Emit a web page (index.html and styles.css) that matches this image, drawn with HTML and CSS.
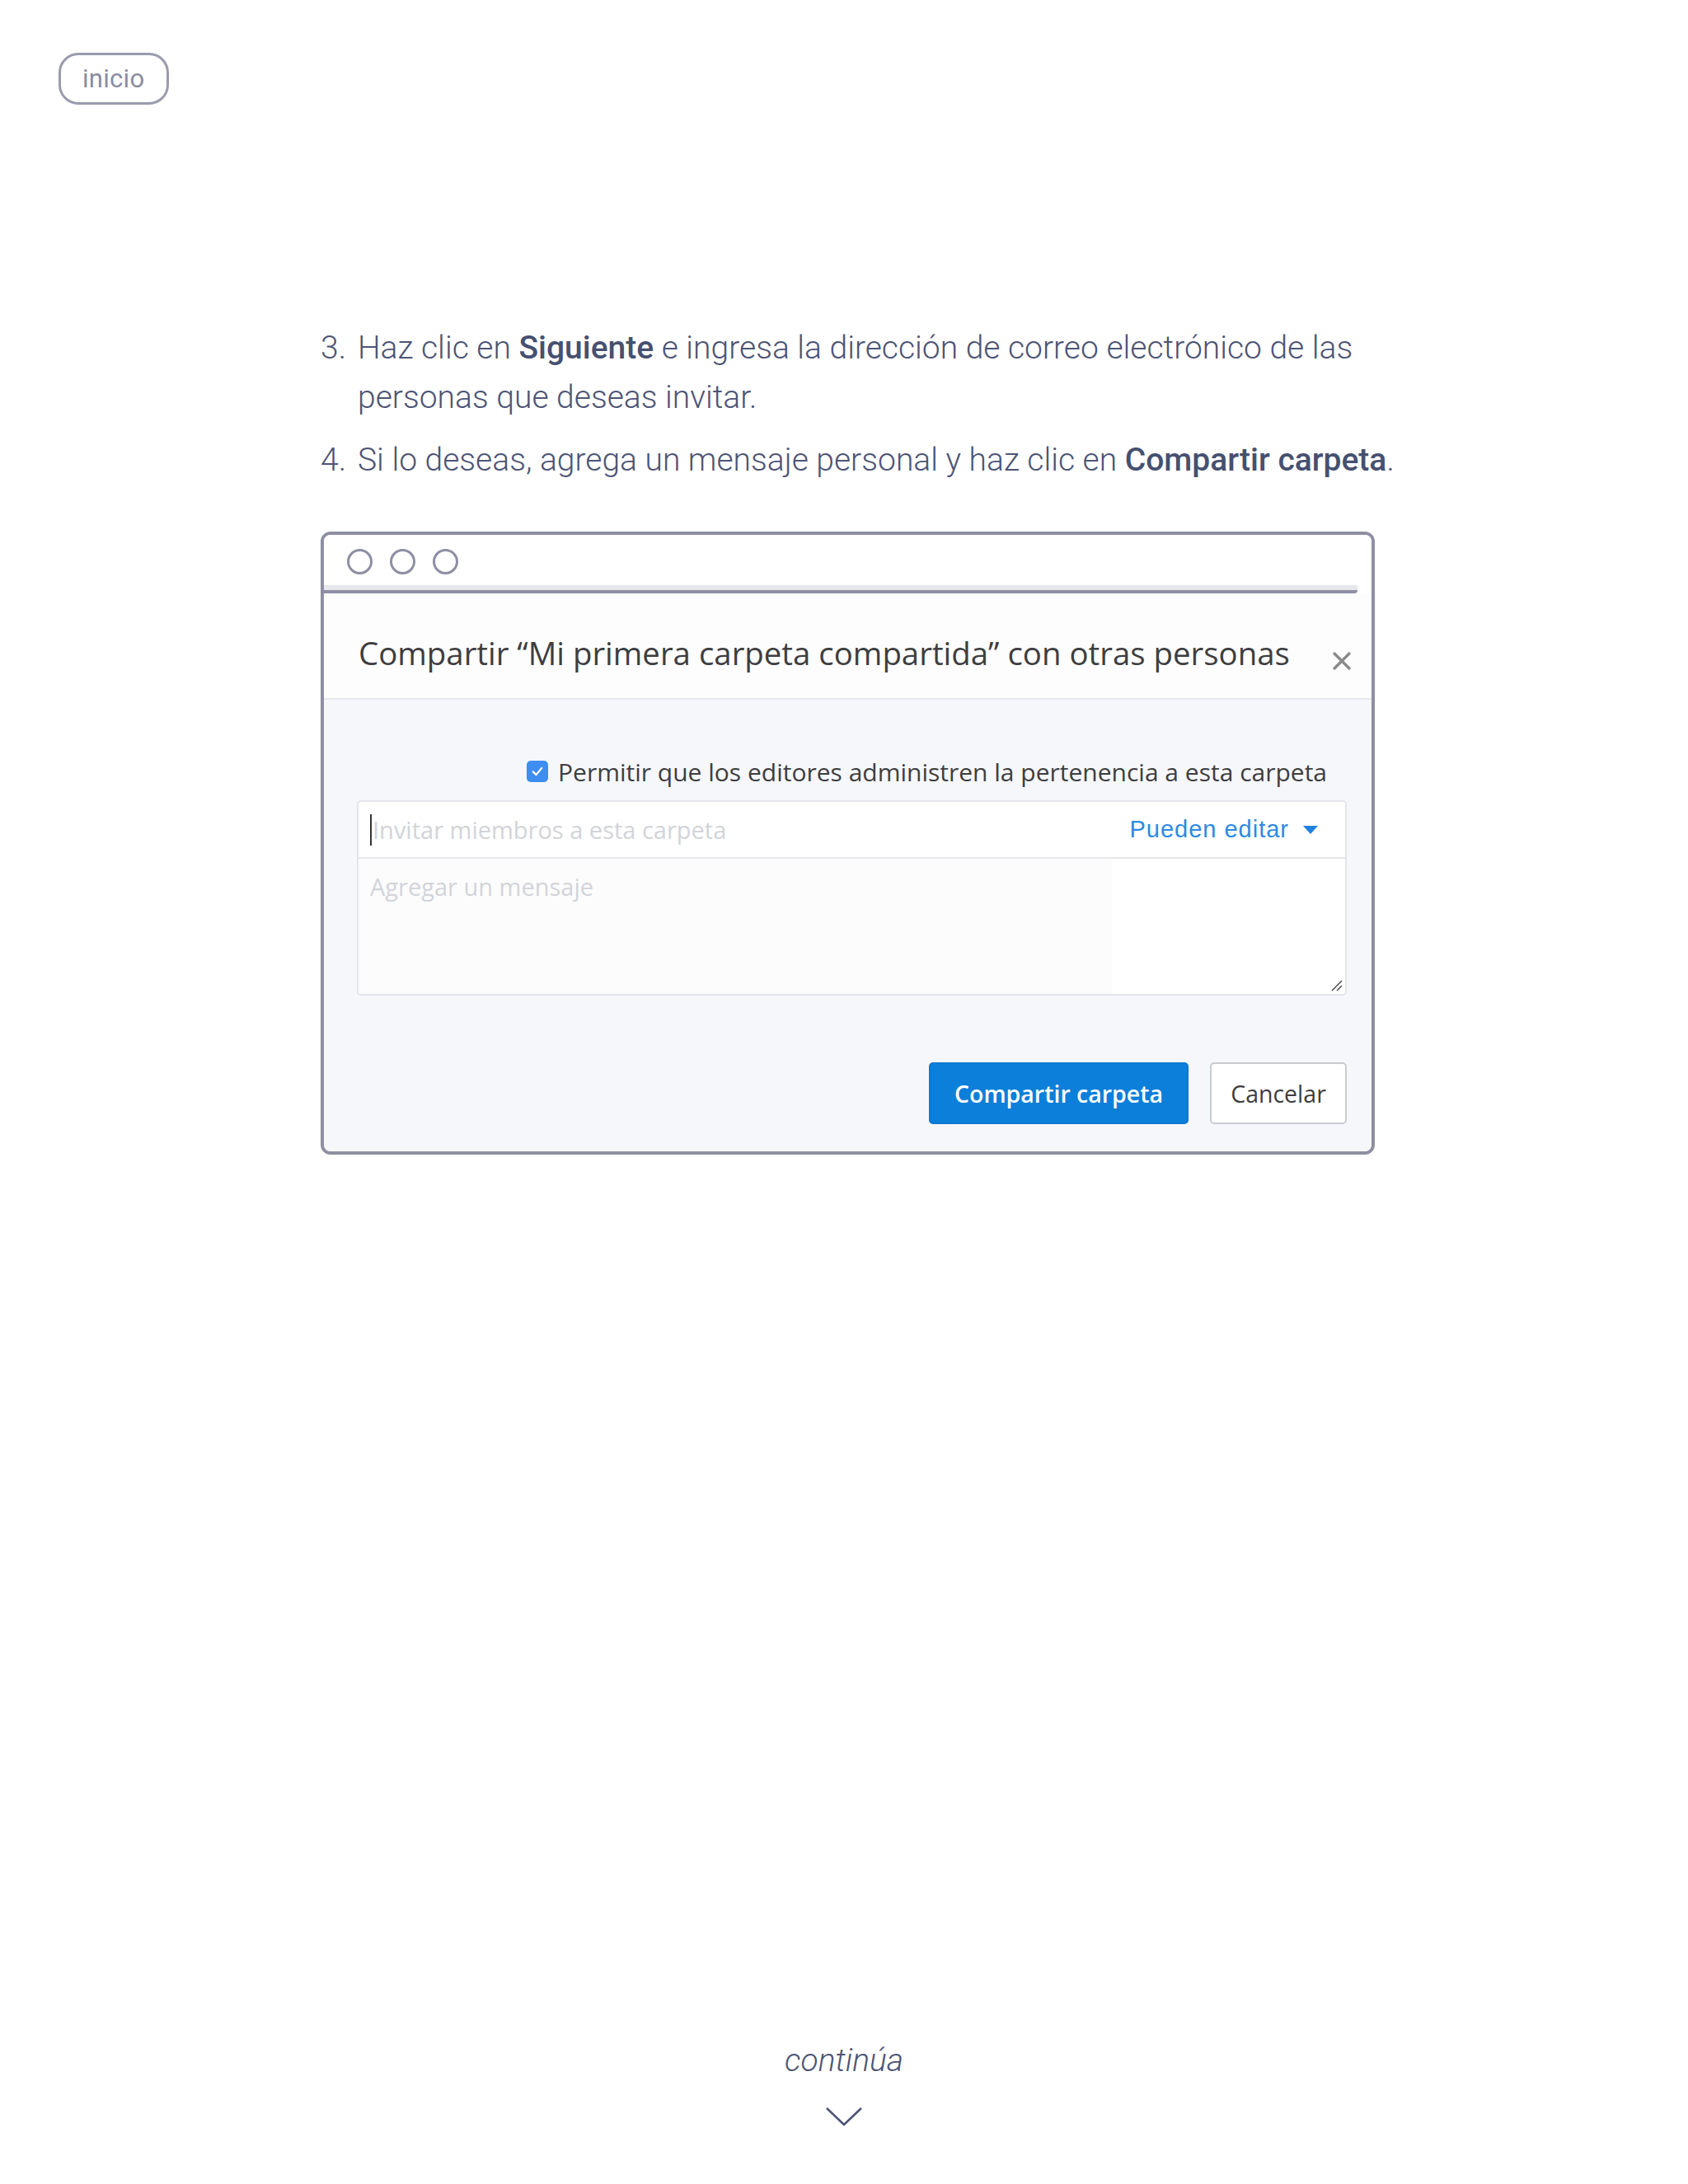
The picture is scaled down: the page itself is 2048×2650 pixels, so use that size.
FILE: index.html
```html
<!DOCTYPE html>
<html lang="es">
<head>
<meta charset="utf-8">
<title>Compartir carpeta</title>
<link rel="stylesheet" href="styles.css">
</head>
<body>
<header class="top">
  <a class="home-pill" href="#">inicio</a>
</header>
<main class="content">
  <ol class="steps">
    <li class="step"><span class="num">3.</span><p>Haz clic en <strong>Siguiente</strong> e ingresa la dirección de correo electrónico de las personas que deseas invitar.</p></li>
    <li class="step"><span class="num">4.</span><p>Si lo deseas, agrega un mensaje personal y haz clic en <strong>Compartir carpeta</strong>.</p></li>
  </ol>
  <figure class="window">
    <div class="titlebar">
      <span class="dot"></span><span class="dot"></span><span class="dot"></span>
    </div>
    <div class="sep"></div>
    <div class="dialog">
      <div class="dialog-head">
        <h2>Compartir “Mi primera carpeta compartida” con otras personas</h2>
        <svg class="close" viewBox="0 0 24 24" width="24" height="24"><path d="M3 3 L21 21 M21 3 L3 21" stroke="#8a8a8a" stroke-width="3.4" stroke-linecap="round" fill="none"/></svg>
      </div>
      <div class="dialog-body">
        <label class="check">
          <span class="box"><svg viewBox="0 0 24 24" width="18" height="18"><path d="M5 12.5 L10 17.5 L19 6.5" stroke="#fff" stroke-width="3" fill="none" stroke-linecap="round" stroke-linejoin="round"/></svg></span>
          Permitir que los editores administren la pertenencia a esta carpeta
        </label>
        <div class="fields">
          <div class="invite">
            <span class="caret"></span>
            <span class="ph">Invitar miembros a esta carpeta</span>
            <span class="perm">Pueden editar <svg viewBox="0 0 20 12" width="20" height="12"><path d="M1 1 L19 1 L10 11 Z" fill="#1f82e0"/></svg></span>
          </div>
          <div class="message">
            <span class="ph">Agregar un mensaje</span>
            <svg class="grip" viewBox="0 0 16 16" width="16" height="16"><path d="M15 3 L3 15 M15 9 L9 15" stroke="#555" stroke-width="1.6" fill="none"/></svg>
          </div>
        </div>
        <div class="actions">
          <button class="btn primary" type="button">Compartir carpeta</button>
          <button class="btn secondary" type="button">Cancelar</button>
        </div>
      </div>
    </div>
  </figure>
</main>
<footer class="more">
  <span class="more-label">continúa</span>
  <svg class="chevron" viewBox="0 0 46 24" width="46" height="24"><path d="M2 2 L23 22 L44 2" stroke="#4d5475" stroke-width="2.6" fill="none"/></svg>
</footer>
</body>
</html>
```

FILE: styles.css
```css
* { box-sizing: border-box; }
html, body { margin: 0; padding: 0; }
body {
  width: 2048px;
  min-height: 2650px;
  background: #ffffff;
  font-family: Roboto, "Noto Sans", sans-serif;
  color: #4d5475;
  position: relative;
}

.top {
  padding: 64px 0 0 71px;
  height: 392px;
}
.home-pill {
  display: inline-flex;
  align-items: center;
  height: 63px;
  width: 134px;
  padding-left: 26px;
  border: 3px solid #9b9bae;
  border-radius: 24px;
  font-size: 31px;
  font-weight: 400;
  color: #8a8b9f;
  text-decoration: none;
  letter-spacing: 0.3px;
}

.content {
  width: 1279px;
  margin-left: 389px;
}

.steps {
  list-style: none;
  margin: 0 -90px 0 0;
  padding: 0;
}
.step {
  display: flex;
  font-size: 39px;
  font-weight: 300;
  line-height: 60px;
}
.step + .step { margin-top: 16px; }
.num { width: 45px; flex: none; }
.step p { margin: 0; }
.step strong { font-weight: 500; color: #465070; }

.window {
  margin: 57px 0 0 0;
  border: 4px solid #8f8fa3;
  border-radius: 12px;
  overflow: hidden;
  background: #fff;
}
.titlebar {
  height: 61px;
  display: flex;
  align-items: center;
  gap: 21px;
  padding: 4px 0 0 28px;
  background: #fff;
}
.dot {
  width: 31px;
  height: 31px;
  border: 3.5px solid #8f8fa3;
  border-radius: 50%;
}
.sep {
  height: 10px;
  margin-right: 17px;
  border-top: 6px solid #e6e7eb;
  background: #8f8fa3;
  border-radius: 0 0 4px 0;
}

.dialog { font-family: "Open Sans", "Noto Sans", sans-serif; }
.dialog-head {
  height: 129px;
  display: flex;
  justify-content: space-between;
  align-items: flex-start;
  padding: 46px 24px 0 42px;
  background: #fdfdfe;
  border-bottom: 2px solid #e7e8ed;
}
.dialog-head h2 {
  margin: 0;
  font-size: 38.4px;
  font-weight: 400;
  color: #3e3e40;
  letter-spacing: 0;
}
.close { margin-top: 24px; width: 24px; height: 24px; }

.dialog-body {
  background: #f6f7fb;
  padding: 67px 30px 33px 40px;
}
.check {
  display: flex;
  align-items: center;
  justify-content: flex-end;
  gap: 12px;
  font-size: 30px;
  color: #3e3e40;
  padding-right: 24px;
  height: 40px;
}
.box {
  width: 26px;
  height: 26px;
  border-radius: 5px;
  background: #3d8ef0;
  display: flex;
  align-items: center;
  justify-content: center;
}
.fields {
  margin-top: 15px;
  border: 2px solid #e3e5ea;
  border-radius: 5px;
  overflow: hidden;
}
.invite {
  height: 69px;
  display: flex;
  align-items: center;
  padding: 0 32px 0 14px;
  background: #fff;
  border-bottom: 2px solid #e5e7ec;
}
.caret {
  width: 2px;
  height: 38px;
  background: #333;
  margin-right: 1px;
}
.ph {
  font-size: 29px;
  color: #d2d4d9;
}
.perm {
  margin-left: auto;
  display: flex;
  align-items: center;
  gap: 16px;
  font-family: "Liberation Sans", Arial, sans-serif;
  font-size: 29px;
  letter-spacing: 1px;
  color: #2d8ae3;
}
.message {
  height: 164px;
  position: relative;
  padding: 14px 14px;
  background: linear-gradient(to right, #fcfcfd 0, #fcfcfd 914px, #ffffff 914px);
}
.grip { position: absolute; right: 3px; bottom: 3px; }

.actions {
  margin-top: 81px;
  display: flex;
  justify-content: flex-end;
  gap: 26px;
}
.btn {
  height: 75px;
  font-family: "Open Sans", "Noto Sans", sans-serif;
  font-size: 28.5px;
  border-radius: 5px;
  padding: 0;
}
.primary {
  width: 315px;
  background: #0b7fda;
  border: 2px solid #0a78cf;
  color: #fff;
  font-weight: 600;
}
.secondary {
  width: 166px;
  background: #fff;
  border: 2px solid #c9cbd0;
  color: #3e3e40;
  font-weight: 400;
}

.more {
  position: absolute;
  left: 0;
  right: 0;
  top: 2470px;
  display: flex;
  flex-direction: column;
  align-items: center;
}
.more-label {
  font-size: 39px;
  font-style: italic;
  font-weight: 300;
  line-height: 60px;
  color: #4d5475;
}
.chevron { margin-top: 26px; }
```
